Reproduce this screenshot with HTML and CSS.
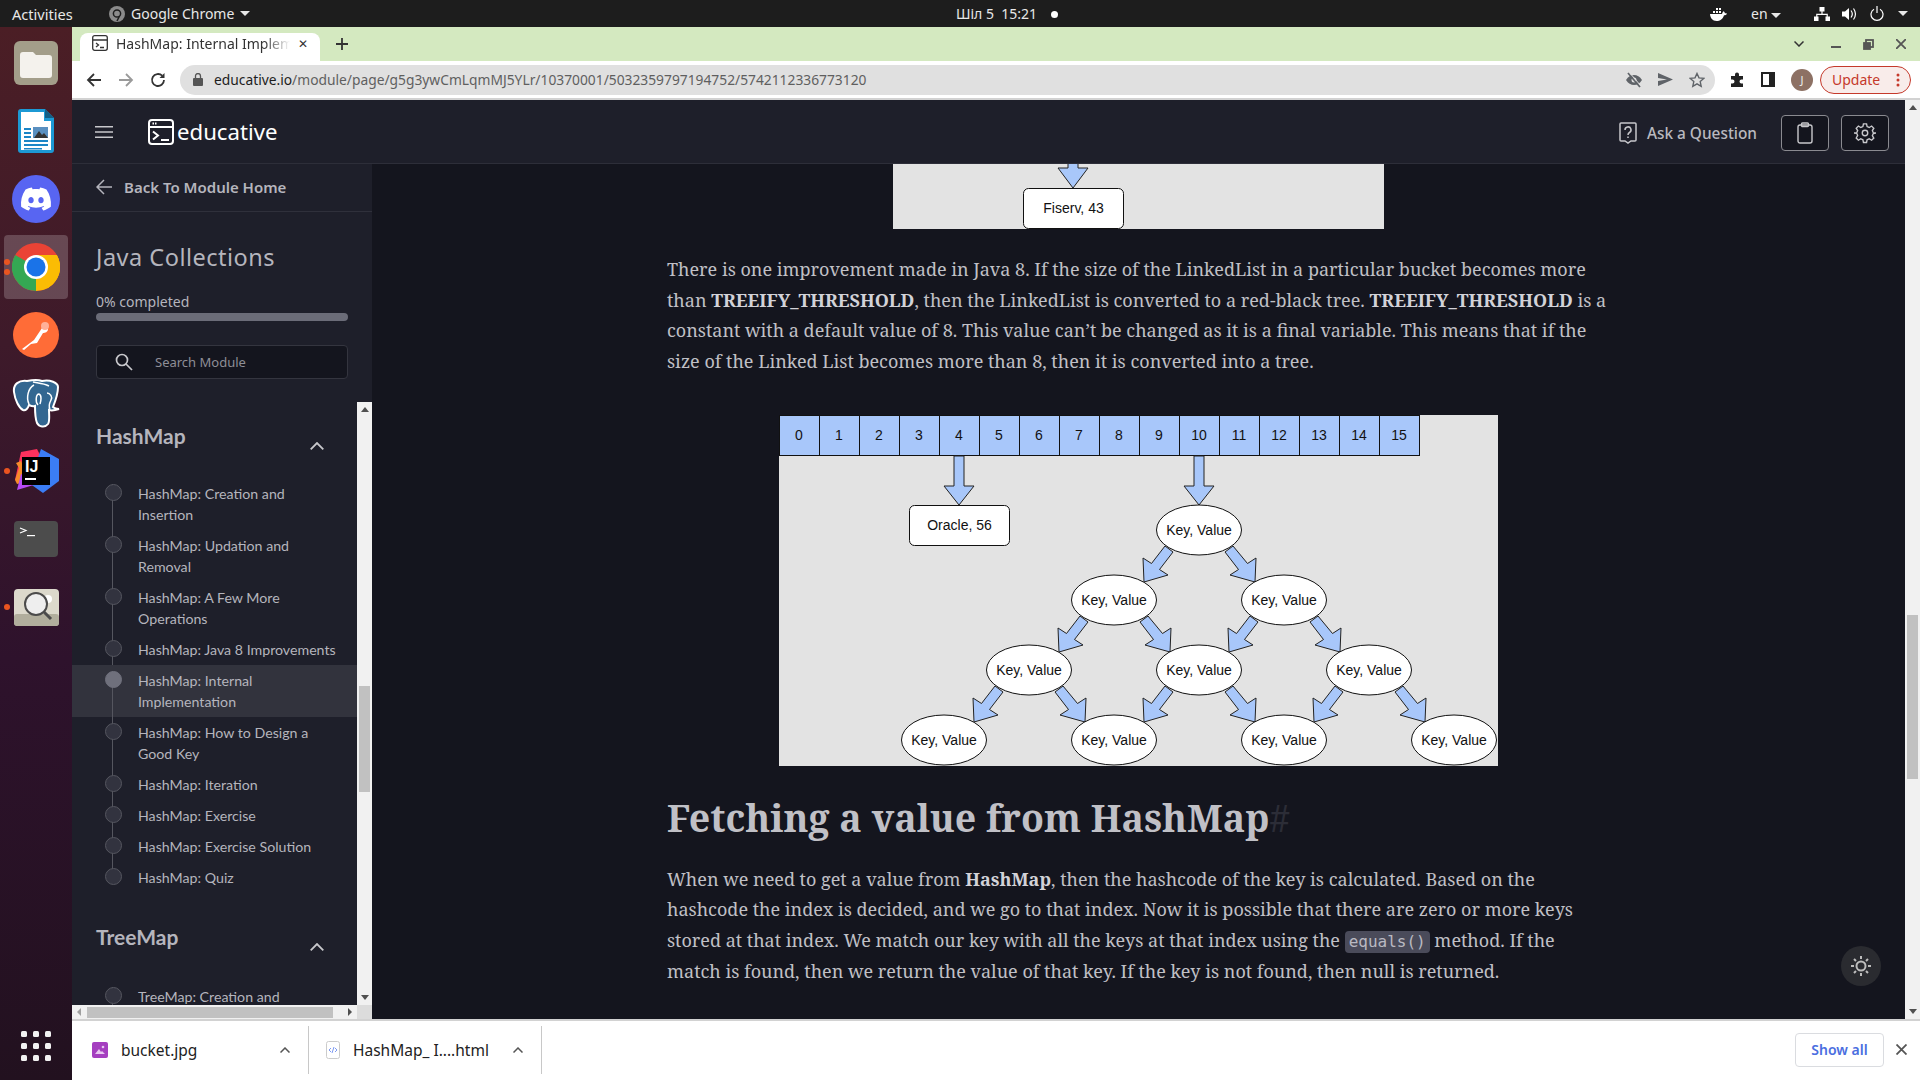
FILE: index.html
```html
<!DOCTYPE html>
<html lang="en">
<head>
  <meta charset="UTF-8">
  <title>HashMap: Internal Implementation</title>
  <link rel="stylesheet" href="styles.css">
</head>
<body>

  <svg class="defs" width="0" height="0">
    <defs>
      <polygon id="arrow-left" points="-34,16 -26,22 -39.5,39.5 -31,45 -55,52 -56,28 -47.5,33.5"/>
      <polygon id="arrow-right" points="34,16 26,22 39.5,39.5 31,45 56,52 57,28 48.5,33.5"/>
      <g id="node">
        <ellipse rx="42.5" ry="25"/>
        <text y="5">Key, Value</text>
      </g>
    </defs>
  </svg>

  <header class="topbar">
    <span class="topbar-activities">Activities</span>
    <span class="topbar-app">
      <svg width="16" height="16" viewBox="0 0 16 16"><circle cx="8" cy="8" r="8" fill="#8b8b8b"/><circle cx="8" cy="7.5" r="3.6" fill="none" stroke="#1d1d1d" stroke-width="1.5"/><path d="M10.5 10 8 15" stroke="#1d1d1d" stroke-width="1.5"/></svg>
      Google Chrome <i class="caret"></i>
    </span>
    <span class="topbar-clock">Шіл 5&nbsp; 15:21 <i class="clock-dot"></i></span>
    <span class="topbar-status">
      <svg class="st-docker" width="17" height="14" viewBox="0 0 17 14"><path d="M0 7h12c.4-1.500 1-2.500 1.800-2.800.7.500 1 1.200 1.100 2 .8-.1 1.500 0 2.100.5-.7 1.200-1.800 1.500-3 1.500C13 12 10 14 6.500 14 2.500 14 .3 11 0 7z" fill="#fff"/><path d="M3 4h2v2H3zM6 4h2v2H6zM9 4h2v2H9zM6 1h2v2H6zM9 1h2v2H9z" fill="#fff"/></svg>
      <span class="st-lang">en <i class="caret"></i></span>
      <svg class="st-net" width="16" height="14" viewBox="0 0 16 14" fill="#fff"><path d="M5.500 0h5v4.500h-5zM0 9.500h4.500V14H0zM11.500 9.500H16V14h-4.500zM7.400 4.500h1.200v2.300h5.200v2.700h-1.200V8H3.400v1.500H2.200V6.800h5.200z"/></svg>
      <svg class="st-vol" width="15" height="14" viewBox="0 0 15 14"><path d="M0 4.500h3L7 1v12L3 9.500H0z" fill="#fff"/><path d="M9 3.500c1.500 2 1.500 5 0 7M11.500 1.500c2.500 3.500 2.500 7.500 0 11" fill="none" stroke="#fff" stroke-width="1.200"/></svg>
      <svg class="st-power" width="14" height="15" viewBox="0 0 14 15"><path d="M4 3.200a6 6 0 1 0 6 0" fill="none" stroke="#fff" stroke-width="1.200"/><path d="M7 0v7" stroke="#fff" stroke-width="1.200"/></svg>
      <i class="caret"></i>
    </span>
  </header>

  <div class="desktop">
    <nav class="dock">
      <div class="dock-item">
        <svg width="44" height="44" viewBox="0 0 44 44"><rect width="44" height="44" rx="6" fill="#a39e8a"/><path d="M6 14a3 3 0 0 1 3-3h10l3 3h13a3 3 0 0 1 3 3v17a3 3 0 0 1-3 3H9a3 3 0 0 1-3-3z" fill="#f4f2ed"/></svg>
      </div>
      <div class="dock-item">
        <svg width="36" height="44" viewBox="0 0 36 44"><path d="M3 0h24l9 9v32a3 3 0 0 1-3 3H3a3 3 0 0 1-3-3V3a3 3 0 0 1 3-3z" fill="#1c99d4"/><path d="M3 3h23v9h7v29H3z" fill="#fff"/><path d="M27 0l9 9h-9z" fill="#125f86"/><path d="M6 19h7v2H6zM6 23h7v2H6zM6 27h7v2H6zM6 31h24v2H6zM6 35h24v2H6zM6 39h18v1.500H6z" fill="#1c86c6"/><rect x="15" y="18" width="15" height="11" fill="#5a90c0"/><path d="M16 29l5-7 3 4 2-2 4 5z" fill="#333"/></svg>
      </div>
      <div class="dock-item">
        <svg width="48" height="48" viewBox="0 0 48 48"><circle cx="24" cy="24" r="24" fill="#5865f2"/><g transform="translate(9 9) scale(1.250)"><path fill="#fff" d="M20.317 4.3698a19.7913 19.7913 0 00-4.8851-1.5152.0741.0741 0 00-.0785.0371c-.211.3753-.4447.8648-.6083 1.2495-1.8447-.2762-3.68-.2762-5.4868 0-.1636-.3933-.4058-.8742-.6177-1.2495a.077.077 0 00-.0785-.037 19.7363 19.7363 0 00-4.8852 1.515.0699.0699 0 00-.0321.0277C.5334 9.0458-.319 13.5799.0992 18.0578a.0824.0824 0 00.0312.0561c2.0528 1.5076 4.0413 2.4228 5.9929 3.0294a.0777.0777 0 00.0842-.0276c.4616-.6304.8731-1.2952 1.226-1.9942a.076.076 0 00-.0416-.1057c-.6528-.2476-1.2743-.5495-1.8722-.8923a.077.077 0 01-.0076-.1277c.1258-.0943.2517-.1923.3718-.2914a.0743.0743 0 01.0776-.0105c3.9278 1.7933 8.18 1.7933 12.0614 0a.0739.0739 0 01.0785.0095c.1202.099.246.1981.3728.2924a.077.077 0 01-.0066.1276 12.2986 12.2986 0 01-1.873.8914.0766.0766 0 00-.0407.1067c.3604.698.7719 1.3628 1.225 1.9932a.076.076 0 00.0842.0286c1.961-.6067 3.9495-1.5219 6.0023-3.0294a.077.077 0 00.0313-.0552c.5004-5.177-.8382-9.6739-3.5485-13.6604a.061.061 0 00-.0312-.0286zM8.02 15.3312c-1.1825 0-2.1569-1.0857-2.1569-2.419 0-1.3332.9555-2.4189 2.157-2.4189 1.2108 0 2.1757 1.0952 2.1568 2.419 0 1.3332-.9555 2.4189-2.1569 2.4189zm7.9748 0c-1.1825 0-2.1569-1.0857-2.1569-2.419 0-1.3332.9554-2.4189 2.1569-2.4189 1.2108 0 2.1757 1.0952 2.1568 2.419 0 1.3332-.946 2.4189-2.1568 2.4189Z"/></g></svg>
      </div>
      <div class="dock-item dock-active">
        <i class="run-dots"><b></b><b></b></i>
        <svg width="48" height="48" viewBox="0 0 48 48"><circle cx="24" cy="24" r="24" fill="#ea4335"/><path d="M24 24L3.200 12A24 24 0 0 0 24 48z" fill="#34a853"/><path d="M24 24v24a24 24 0 0 0 20.800-36z" fill="#fbbc04"/><path d="M24 12h20.800A24 24 0 0 1 36 44.800L24 24z" fill="#fbbc04"/><circle cx="24" cy="24" r="12" fill="#fff"/><circle cx="24" cy="24" r="9.500" fill="#1a73e8"/></svg>
      </div>
      <div class="dock-item">
        <svg width="46" height="46" viewBox="0 0 46 46"><circle cx="23" cy="23" r="23" fill="#ff6c37"/><path d="M9 37l12-9 8-12c2-3 6-3 6 1 0 3-3 4-5 4l-6 10-6 1-7 6z" fill="#fff"/><circle cx="32" cy="14" r="4" fill="#ffb199"/></svg>
      </div>
      <div class="dock-item">
        <svg width="48" height="49" viewBox="-1 -1 48 49"><path d="M14 1C6 0 0 4 1 12c1 8 5 16 9 18 3 1 5-2 6-5 2 1 4 2 6 1 0 6 0 12 2 17 2 4 8 5 11 1 2-3 1-9 1-14 3 1 7 0 10-1-3 0-5-1-6-2 2-5 5-14 5-20C45 3 37-1 29 1c-5-2-10-1-15 0z" fill="#336791" stroke="#fff" stroke-width="2"/><path d="M16 24C13 18 15 8 21 5M25 25c-3-3-2-11 1-11 3 1 2 7 1 10M37 29c-2-3 0-7 1-9 2-3-1-7-4-7M20 2c4 1 10 1 16 4" fill="none" stroke="#fff" stroke-width="1.500"/></svg>
      </div>
      <div class="dock-item">
        <i class="run-dots"><b></b></i>
        <svg width="46" height="46" viewBox="0 0 46 46"><path d="M8 4l16-3 4 8-12 20-14 3z" fill="#fe315d"/><path d="M28 1l18 10v22L30 45 16 35z" fill="#3b7df5"/><path d="M2 32l4-12-3-5 5-2 8 20-12 3z" fill="#f68b2b"/><path d="M4 42l4-16 16 10z" fill="#b74af7"/><rect x="9" y="9" width="28" height="28" fill="#000"/><text class="ij-text" x="12" y="24">IJ</text><rect x="12" y="30" width="11" height="2" fill="#fff"/></svg>
      </div>
      <div class="dock-item">
        <svg width="44" height="36" viewBox="0 0 44 36"><rect width="44" height="36" rx="4" fill="#4c4c4c"/><path d="M6 7l6 2.500-6 2.500" fill="none" stroke="#fff" stroke-width="1.200"/><path d="M13 14h8v1.200h-8z" fill="#fff"/></svg>
      </div>
      <div class="dock-item">
        <i class="run-dots"><b></b></i>
        <svg width="45" height="37" viewBox="0 0 45 37"><rect width="45" height="37" rx="4" fill="#dcd9cc"/><rect y="25" width="45" height="12" rx="3" fill="#b1ae9d"/><circle cx="34" cy="10" r="4" fill="#fff"/><circle cx="22" cy="15" r="11" fill="#eee" stroke="#4b4b4b" stroke-width="2"/><path d="M30 23l7 7" stroke="#4b4b4b" stroke-width="3"/></svg>
      </div>
      <div class="dock-apps">
        <i></i><i></i><i></i><i></i><i></i><i></i><i></i><i></i><i></i>
      </div>
    </nav>

    <div class="browser">
      <div class="tabstrip">
        <div class="tab">
          <svg width="16" height="16" viewBox="0 0 16 16" fill="none" stroke="#333" stroke-width="1.300"><rect x=".7" y=".7" width="14.600" height="14.600" rx="2"/><path d="M1 5h14M4 8l2.500 2L4 12M8 12.500h4"/></svg>
          <span class="tab-title">HashMap: Internal Implementation</span>
          <span class="tab-close">✕</span>
        </div>
        <svg class="tab-plus" width="12" height="12" viewBox="0 0 12 12"><path d="M6 0v12M0 6h12" stroke="#333" stroke-width="1.800"/></svg>
        <div class="window-btns">
          <svg class="win-list" width="10" height="6" viewBox="0 0 10 6" fill="none" stroke="#333" stroke-width="1.500"><path d="M.5.500L5 5 9.500.500"/></svg>
          <i class="win-min"></i>
          <svg width="11" height="11" viewBox="0 0 11 11" fill="none" stroke="#555" stroke-width="1.800"><rect x="3" y="1" width="7" height="7"/><rect x="1" y="4" width="6" height="6" fill="#555"/></svg>
          <svg width="10" height="10" viewBox="0 0 10 10" stroke="#555" stroke-width="1.800"><path d="M0 0l10 10M10 0L0 10"/></svg>
        </div>
      </div>

      <div class="toolbar">
        <svg width="16" height="16" viewBox="0 0 16 16" fill="none" stroke="#333" stroke-width="1.800"><path d="M15 8H2M8 2L2 8l6 6"/></svg>
        <svg width="16" height="16" viewBox="0 0 16 16" fill="none" stroke="#9a9a9a" stroke-width="1.800"><path d="M1 8h13M8 2l6 6-6 6"/></svg>
        <svg width="16" height="16" viewBox="0 0 16 16" fill="none" stroke="#333" stroke-width="1.800"><path d="M14 8a6 6 0 1 1-1.800-4.300"/><path d="M14.500 1v5h-5z" fill="#333" stroke="none"/></svg>
        <div class="omnibox">
          <svg width="10" height="13" viewBox="0 0 10 13"><rect y="5" width="10" height="8" rx="1" fill="#555"/><path d="M2.500 5V3a2.500 2.500 0 0 1 5 0v2" fill="none" stroke="#555" stroke-width="1.300"/></svg>
          <span class="url"><b>educative.io</b>/module/page/g5g3ywCmLqmMJ5YLr/10370001/5032359797194752/5742112336773120</span>
          <span class="omni-icons">
            <svg width="16" height="16" viewBox="0 0 16 16"><path d="M0 8c2-3.500 5-5 8-5s6 1.500 8 5c-2 3.500-5 5-8 5s-6-1.500-8-5z" fill="#5f6368"/><circle cx="8" cy="8" r="2.500" fill="#e0e0e0"/><path d="M2 1l12 14" stroke="#5f6368" stroke-width="1.800"/><path d="M3 0l12 14" stroke="#e0e0e0"/></svg>
            <svg width="15" height="13" viewBox="0 0 15 13"><path d="M0 0l15 6.500L0 13V8l9-1.500L0 5z" fill="#5f6368"/></svg>
            <svg width="16" height="16" viewBox="0 0 16 16"><path d="M8 1.500l2 4.400 4.800.5-3.600 3.200 1 4.700L8 11.900l-4.200 2.400 1-4.700L1.200 6.400 6 5.900z" fill="none" stroke="#5f6368" stroke-width="1.400"/></svg>
          </span>
        </div>
        <span class="tool-icons">
          <svg width="16" height="16" viewBox="0 0 16 16"><path d="M6 2.500a2 2 0 0 1 4 0V4h4v3.500h-1.500a2 2 0 0 0 0 4H14V15H2v-3.500h1.500a2 2 0 0 0 0-4H2V4h4z" fill="#222"/></svg>
          <svg width="14" height="15" viewBox="0 0 14 15"><rect x="1" y="1" width="12" height="13" fill="#fff" stroke="#222" stroke-width="2"/><rect x="8" y="1" width="5" height="13" fill="#222"/></svg>
          <span class="avatar">J</span>
        </span>
        <span class="update-btn">Update <svg width="4" height="14" viewBox="0 0 4 14" fill="#c5392b"><circle cx="2" cy="2" r="1.500"/><circle cx="2" cy="7" r="1.500"/><circle cx="2" cy="12" r="1.500"/></svg></span>
      </div>

      <div class="app">
        <div class="app-main">
          <div class="app-header">
            <svg class="burger" width="18" height="12" viewBox="0 0 18 12" fill="#c8c8cc"><path d="M0 0h18v1.600H0zM0 5.200h18v1.600H0zM0 10.400h18V12H0z"/></svg>
            <svg class="logo-icon" width="26" height="26" viewBox="0 0 26 26" fill="none" stroke="#fff" stroke-width="2"><rect x="1" y="1" width="24" height="24" rx="3"/><path d="M1 8h24M5 12.500l5 4-5 4M13 21h8"/><path d="M4.500 4.500h5" stroke-dasharray="1.500 1"/></svg>
            <span class="logo-text">educative</span>
            <span class="ask">
              <svg width="18" height="22" viewBox="0 0 18 22" fill="none" stroke="#c8c8cc" stroke-width="1.500"><path d="M2 1h14a1 1 0 0 1 1 1v16a1 1 0 0 1-1 1h-4l-3 2-3-2H2a1 1 0 0 1-1-1V2a1 1 0 0 1 1-1z"/><path d="M6 8a3 3 0 1 1 4.500 2.500C9.500 11 9 11.700 9 13M9 14.500v1.500"/></svg>
              Ask a Question
            </span>
            <span class="head-btn">
              <svg width="16" height="22" viewBox="0 0 16 22" fill="none" stroke="#c8c8cc" stroke-width="1.400"><rect x="1" y="3" width="14" height="18" rx="2"/><rect x="4.500" y="1" width="7" height="3.500" rx="1"/></svg>
            </span>
            <span class="head-btn">
              <svg width="22" height="22" viewBox="0 0 24 24" fill="none" stroke="#c8c8cc" stroke-width="1.500"><circle cx="12" cy="12" r="3"/><path d="M10.300 2h3.400l.6 3 2.300 1 2.600-1.600 2.400 2.400L20 9.400l1 2.300 3 .3v0l-3 .6-1 2.300 1.600 2.600-2.400 2.400-2.600-1.600-2.300 1-.6 3h-3.400l-.6-3-2.300-1-2.600 1.600-2.400-2.400L4 14.600l-1-2.300-3-.3v0l3-.3 1-2.300-1.600-2.600 2.400-2.400L7.400 6l2.300-1z"/></svg>
            </span>
          </div>

          <div class="app-body">
            <aside class="sidebar">
              <div class="back-row">
                <svg width="16" height="16" viewBox="0 0 16 16" fill="none" stroke="#b5b5bd" stroke-width="1.500"><path d="M16 8H1M8 1L1 8l7 7"/></svg>
                <span>Back To Module Home</span>
              </div>
              <div class="course-head">
                <h1>Java Collections</h1>
                <div class="progress-label">0% completed</div>
                <div class="progress-bar"></div>
                <div class="search-box">
                  <svg width="18" height="18" viewBox="0 0 18 18" fill="none" stroke="#c8c8cc" stroke-width="1.700"><circle cx="7" cy="7" r="5.500"/><path d="M11 11l6 6"/></svg>
                  <span>Search Module</span>
                </div>
              </div>

              <div class="side-scroll">
                <div class="side-list">
                  <div class="section-head">
                    <h2>HashMap</h2>
                    <svg width="14" height="8" viewBox="0 0 14 8" fill="none" stroke="#c8c8cc" stroke-width="1.800"><path d="M.7 7.300L7 1l6.300 6.300"/></svg>
                  </div>
                  <ul class="lessons">
                    <li>HashMap: Creation and<br>Insertion</li>
                    <li>HashMap: Updation and<br>Removal</li>
                    <li>HashMap: A Few More<br>Operations</li>
                    <li>HashMap: Java 8 Improvements</li>
                    <li class="active">HashMap: Internal<br>Implementation</li>
                    <li>HashMap: How to Design a<br>Good Key</li>
                    <li>HashMap: Iteration</li>
                    <li>HashMap: Exercise</li>
                    <li>HashMap: Exercise Solution</li>
                    <li class="last">HashMap: Quiz</li>
                  </ul>
                  <div class="section-head section-tree">
                    <h2>TreeMap</h2>
                    <svg width="14" height="8" viewBox="0 0 14 8" fill="none" stroke="#c8c8cc" stroke-width="1.800"><path d="M.7 7.300L7 1l6.300 6.300"/></svg>
                  </div>
                  <ul class="lessons">
                    <li>TreeMap: Creation and<br>Insertion</li>
                  </ul>
                </div>
                <div class="vbar side-vbar">
                  <i class="up"></i>
                  <b class="thumb"></b>
                  <i class="down"></i>
                </div>
              </div>
              <div class="hbar">
                <i class="left"></i>
                <b class="thumb"></b>
                <i class="right"></i>
                <span class="corner"></span>
              </div>
            </aside>

            <main class="content">
              <div class="column">
                <svg class="figure figure-top" width="491" height="65" viewBox="0 0 491 65">
                  <rect class="fig-bg" width="491" height="65"/>
                  <polygon class="fig-arrow" points="175,-5 185,-5 185,4 195,4 180,24 165,4 175,4"/>
                  <rect class="fig-box" x="130.500" y="24.500" width="100" height="40" rx="5"/>
                  <text x="180.500" y="49">Fiserv, 43</text>
                </svg>

                <p>There is one improvement made in Java 8. If the size of the LinkedList in a particular bucket becomes more<br>
                than <strong>TREEIFY_THRESHOLD</strong>, then the LinkedList is converted to a red-black tree. <strong>TREEIFY_THRESHOLD</strong> is a<br>
                constant with a default value of 8. This value can’t be changed as it is a final variable. This means that if the<br>
                size of the Linked List becomes more than 8, then it is converted into a tree.</p>

                <svg class="figure figure-tree" width="719" height="351" viewBox="0 0 719 351">
                  <rect class="fig-bg" width="719" height="351"/>
                  <g class="cells">
                    <rect x="0.500" y="0.500" width="40" height="40"/><rect x="40.500" y="0.500" width="40" height="40"/><rect x="80.500" y="0.500" width="40" height="40"/><rect x="120.500" y="0.500" width="40" height="40"/>
                    <rect x="160.500" y="0.500" width="40" height="40"/><rect x="200.500" y="0.500" width="40" height="40"/><rect x="240.500" y="0.500" width="40" height="40"/><rect x="280.500" y="0.500" width="40" height="40"/>
                    <rect x="320.500" y="0.500" width="40" height="40"/><rect x="360.500" y="0.500" width="40" height="40"/><rect x="400.500" y="0.500" width="40" height="40"/><rect x="440.500" y="0.500" width="40" height="40"/>
                    <rect x="480.500" y="0.500" width="40" height="40"/><rect x="520.500" y="0.500" width="40" height="40"/><rect x="560.500" y="0.500" width="40" height="40"/><rect x="600.500" y="0.500" width="40" height="40"/>
                  </g>
                  <text x="20" y="25">0</text><text x="60" y="25">1</text><text x="100" y="25">2</text><text x="140" y="25">3</text>
                  <text x="180" y="25">4</text><text x="220" y="25">5</text><text x="260" y="25">6</text><text x="300" y="25">7</text>
                  <text x="340" y="25">8</text><text x="380" y="25">9</text><text x="420" y="25">10</text><text x="460" y="25">11</text>
                  <text x="500" y="25">12</text><text x="540" y="25">13</text><text x="580" y="25">14</text><text x="620" y="25">15</text>

                  <polygon class="fig-arrow" points="175,41 185,41 185,71 195,71 180,90 165,71 175,71"/>
                  <polygon class="fig-arrow" points="415,41 425,41 425,71 435,71 420,90 405,71 415,71"/>
                  <rect class="fig-box" x="130.500" y="90.500" width="100" height="40" rx="5"/>
                  <text x="180.500" y="115">Oracle, 56</text>

                  <g class="fig-arrow">
                    <use href="#arrow-left" x="420" y="115"/><use href="#arrow-right" x="420" y="115"/>
                    <use href="#arrow-left" x="335" y="185"/><use href="#arrow-right" x="335" y="185"/>
                    <use href="#arrow-left" x="505" y="185"/><use href="#arrow-right" x="505" y="185"/>
                    <use href="#arrow-left" x="250" y="255"/><use href="#arrow-right" x="250" y="255"/>
                    <use href="#arrow-left" x="420" y="255"/><use href="#arrow-right" x="420" y="255"/>
                    <use href="#arrow-left" x="590" y="255"/><use href="#arrow-right" x="590" y="255"/>
                  </g>
                  <use href="#node" x="420" y="115"/>
                  <use href="#node" x="335" y="185"/><use href="#node" x="505" y="185"/>
                  <use href="#node" x="250" y="255"/><use href="#node" x="420" y="255"/><use href="#node" x="590" y="255"/>
                  <use href="#node" x="165" y="325"/><use href="#node" x="335" y="325"/><use href="#node" x="505" y="325"/><use href="#node" x="675" y="325"/>
                </svg>

                <h2 class="article-h">Fetching a value from HashMap<span class="hash">#</span></h2>

                <p>When we need to get a value from <strong>HashMap</strong>, then the hashcode of the key is calculated. Based on the<br>
                hashcode the index is decided, and we go to that index. Now it is possible that there are zero or more keys<br>
                stored at that index. We match our key with all the keys at that index using the <code>equals()</code> method. If the<br>
                match is found, then we return the value of that key. If the key is not found, then null is returned.</p>
              </div>
              <div class="theme-toggle">
                <svg width="20" height="20" viewBox="0 0 20 20" fill="none" stroke="#bdbdbd" stroke-width="2"><circle cx="10" cy="10" r="4.500"/><path d="M10 0v3M10 17v3M0 10h3M17 10h3M3 3l2 2M15 15l2 2M17 3l-2 2M5 15l-2 2"/></svg>
              </div>
            </main>
          </div>
        </div>
        <div class="vbar page-vbar">
          <i class="up"></i>
          <b class="thumb"></b>
          <i class="down"></i>
        </div>
      </div>

      <div class="downloads">
        <div class="dl-item dl-first">
          <svg width="16" height="16" viewBox="0 0 16 16"><rect width="16" height="16" rx="2" fill="#a53fc0"/><path d="M3 12l4-5 2 3 1-1 3 3z" fill="#e8c8f0"/><circle cx="11" cy="5" r="1.300" fill="#e8c8f0"/></svg>
          <span class="dl-name">bucket.jpg</span>
          <svg class="dl-chev" width="10" height="6" viewBox="0 0 10 6" fill="none" stroke="#555" stroke-width="1.500"><path d="M.5 5.500L5 1l4.500 4.500"/></svg>
        </div>
        <div class="dl-item dl-second">
          <svg width="14" height="18" viewBox="0 0 14 18"><rect x=".5" y=".5" width="13" height="17" rx="2" fill="#fff" stroke="#ccc"/><path d="M5 7L3 9l2 2M9 7l2 2-2 2M8 6l-2 6" fill="none" stroke="#6f8ff0" stroke-width=".9"/></svg>
          <span class="dl-name">HashMap_ I....html</span>
          <svg class="dl-chev" width="10" height="6" viewBox="0 0 10 6" fill="none" stroke="#555" stroke-width="1.500"><path d="M.5 5.500L5 1l4.500 4.500"/></svg>
        </div>
        <span class="show-all">Show all</span>
        <svg class="dl-close" width="11" height="11" viewBox="0 0 11 11" stroke="#555" stroke-width="1.800"><path d="M.5.500l10 10M10.500.500l-10 10"/></svg>
      </div>
    </div>
  </div>

</body>
</html>
```

FILE: styles.css
```css
* {
  box-sizing: border-box;
}

html, body {
  margin: 0;
  padding: 0;
  height: 100%;
  overflow: hidden;
}

body {
  width: 1920px;
  height: 1080px;
  display: flex;
  flex-direction: column;
  font-family: "Noto Sans", sans-serif;
}

.defs {
  position: absolute;
}

.caret {
  display: inline-block;
  width: 0;
  height: 0;
  border-left: 5px solid transparent;
  border-right: 5px solid transparent;
  border-top: 5px solid currentColor;
  vertical-align: middle;
}

/* ubuntu top bar */
.topbar {
  height: 27px;
  background: #1d1d1d;
  color: #e8e8e8;
  font-size: 14px;
  display: flex;
  align-items: center;
  position: relative;
  flex: none;
}

.topbar-activities {
  margin-left: 12px;
  width: 97px;
  font-size: 14.6px;
}

.topbar-app {
  display: flex;
  align-items: center;
  gap: 6px;
}

.topbar-clock {
  position: absolute;
  left: 956px;
  top: 4px;
  white-space: nowrap;
}

.clock-dot {
  display: inline-block;
  width: 7px;
  height: 7px;
  border-radius: 50%;
  background: #fff;
  margin-left: 10px;
  vertical-align: 1px;
}

.topbar-status {
  margin-left: auto;
  display: flex;
  align-items: center;
  padding-right: 12px;
}

.st-lang {
  margin-left: 24px;
  width: 54px;
}

.st-net { margin-left: 9px; }
.st-vol { margin-left: 12px; }
.st-power { margin-left: 13px; }
.topbar-status > .caret { margin-left: 14px; }

.desktop {
  flex: 1;
  display: flex;
  min-height: 0;
}

/* dock */
.dock {
  width: 72px;
  flex: none;
  display: flex;
  flex-direction: column;
  padding-top: 2px;
  background: linear-gradient(to bottom, #4b1e25 0%, #3e1a2a 30%, #2e122c 60%, #22111f 100%);
}

.dock-item {
  height: 68px;
  display: flex;
  align-items: center;
  justify-content: center;
  position: relative;
  flex: none;
}

.dock-active::before {
  content: "";
  position: absolute;
  left: 4px;
  right: 4px;
  top: 2px;
  bottom: 2px;
  border-radius: 4px;
  background: rgba(255, 255, 255, 0.2);
}

.dock-active svg {
  position: relative;
}

.run-dots {
  position: absolute;
  left: 4px;
  top: 50%;
  transform: translateY(-50%);
  display: flex;
  flex-direction: column;
  gap: 4px;
}

.run-dots b {
  display: block;
  width: 6px;
  height: 6px;
  border-radius: 50%;
  background: #e95420;
}

.ij-text {
  font-family: "Liberation Sans", sans-serif;
  font-weight: bold;
  font-size: 16px;
  fill: #fff;
}

.dock-apps {
  margin: auto 0 19px 21px;
  width: 30px;
  display: grid;
  grid-template-columns: repeat(3, 6px);
  gap: 6px;
}

.dock-apps i {
  width: 6px;
  height: 6px;
  border-radius: 1.5px;
  background: #f2f2f2;
}

.browser {
  flex: 1;
  min-width: 0;
  display: flex;
  flex-direction: column;
}

/* chrome tabs */
.tabstrip {
  height: 34px;
  flex: none;
  background: #d4e9c0;
  display: flex;
  align-items: flex-end;
  padding-left: 8px;
}

.tab {
  width: 240px;
  height: 28px;
  background: #fff;
  border-radius: 8px 8px 0 0;
  display: flex;
  align-items: center;
  padding: 0 12px 8px;
  gap: 8px;
}

.tab svg {
  flex: none;
}

.tab-title {
  flex: 1;
  font-size: 14px;
  color: #333;
  white-space: nowrap;
  overflow: hidden;
  -webkit-mask-image: linear-gradient(to right, #000 85%, transparent);
  mask-image: linear-gradient(to right, #000 85%, transparent);
}

.tab-close {
  font-size: 12px;
  color: #333;
}

.tab-plus {
  margin: 0 0 11px 16px;
}

.window-btns {
  margin-left: auto;
  display: flex;
  align-items: center;
  gap: 22px;
  height: 34px;
  padding-right: 14px;
}

.win-list {
  margin-right: 5px;
}

.win-min {
  width: 10px;
  height: 2px;
  background: #555;
  margin-top: 6px;
}

/* chrome toolbar */
.toolbar {
  height: 39px;
  flex: none;
  background: #fff;
  border-bottom: 2px solid #d2d2d2;
  display: flex;
  align-items: center;
  padding-left: 14px;
  gap: 16px;
}

.toolbar > svg {
  flex: none;
}

.omnibox {
  width: 1535px;
  margin-left: -2px;
  height: 30px;
  flex: none;
  background: #e0e0e0;
  border-radius: 15px;
  display: flex;
  align-items: center;
  padding-left: 13px;
  gap: 11px;
}

.url {
  font-size: 13.8px;
  color: #5f5f5f;
  white-space: nowrap;
}

.url b {
  font-weight: normal;
  color: #1d1d1d;
}

.omni-icons {
  margin-left: auto;
  padding-right: 10px;
  display: flex;
  align-items: center;
  gap: 16px;
}

.tool-icons {
  display: flex;
  align-items: center;
  gap: 16px;
  margin-left: -2px;
}

.avatar {
  width: 22px;
  height: 22px;
  border-radius: 50%;
  background: #8d7164;
  color: #eee;
  font-size: 11px;
  display: flex;
  align-items: center;
  justify-content: center;
}

.update-btn {
  width: 91px;
  height: 28px;
  margin-left: -9px;
  border: 1px solid #c5392b;
  border-radius: 14px;
  background: #f8ecea;
  color: #c5392b;
  font-size: 14px;
  display: flex;
  align-items: center;
  justify-content: space-between;
  padding: 0 10px 0 11px;
}

/* educative page */
.app {
  flex: 1;
  min-height: 0;
  display: flex;
}

.app-main {
  flex: 1;
  min-width: 0;
  display: flex;
  flex-direction: column;
}

.app-header {
  height: 64px;
  flex: none;
  background: #1e1f2a;
  border-bottom: 1px solid #2d2e39;
  display: flex;
  align-items: center;
  padding: 0 16px 0 23px;
}

.burger { margin-top: 1px; }
.logo-icon { margin-left: 35px; }

.logo-text {
  margin-left: 3px;
  color: #fff;
  font-size: 22.2px;
  font-family: "Noto Sans", sans-serif;
}

.ask {
  margin: 3px 24px 0 auto;
  display: flex;
  align-items: center;
  gap: 10px;
  font-size: 15.4px;
  font-weight: 500;
  color: #b9b9bf;
}

.head-btn {
  width: 48px;
  height: 36px;
  margin-top: 3px;
  border: 1px solid #8a8a90;
  border-radius: 4px;
  background: #14151e;
  display: flex;
  align-items: center;
  justify-content: center;
}

.head-btn + .head-btn {
  margin-left: 12px;
}

.app-body {
  flex: 1;
  min-height: 0;
  display: flex;
}

/* sidebar */
.sidebar {
  width: 300px;
  flex: none;
  background: #1e1f2a;
  display: flex;
  flex-direction: column;
  color: #b5b5bd;
}

.back-row {
  height: 48px;
  flex: none;
  border-bottom: 1px solid #2f303b;
  display: flex;
  align-items: center;
  gap: 12px;
  padding: 0 0 2px 24px;
  font-size: 15px;
  font-weight: 600;
}

.course-head {
  height: 190px;
  flex: none;
  padding: 29px 24px 0;
}

.course-head h1 {
  margin: 0;
  font-size: 23.5px;
  line-height: 32px;
  font-weight: 400;
  letter-spacing: 0.5px;
  color: #b5b5bd;
}

.progress-label {
  margin-top: 19px;
  font-size: 14px;
  line-height: 20px;
}

.progress-bar {
  margin-top: 1px;
  height: 8px;
  border-radius: 4px;
  background: #6b6c78;
}

.search-box {
  margin-top: 24px;
  height: 34px;
  border: 1px solid #34353f;
  border-radius: 4px;
  background: #14151e;
  display: flex;
  align-items: center;
  padding-left: 18px;
  gap: 22px;
  font-size: 13px;
  color: #8e8e96;
}

.side-scroll {
  flex: 1;
  min-height: 0;
  display: flex;
  overflow: hidden;
}

.side-list {
  flex: 1;
  min-width: 0;
  overflow: hidden;
}

.section-head {
  height: 76px;
  padding: 21px 33px 0 24px;
  display: flex;
  justify-content: space-between;
  align-items: flex-start;
}

.section-head h2 {
  margin: 0;
  font-family: "Lato", sans-serif;
  font-size: 21px;
  line-height: 26px;
  font-weight: 700;
  color: #b5b5bd;
}

.section-head svg {
  margin-top: 19px;
}

.section-tree {
  margin-top: 14px;
  height: 73.5px;
  padding-top: 17px;
}

.lessons {
  list-style: none;
  margin: 0;
  padding: 0;
}

.lessons li {
  position: relative;
  padding: 5px 10px 5px 66px;
  font-family: "Lato", sans-serif;
  font-size: 14.2px;
  line-height: 21px;
  color: #b5b5bd;
}

/* dot and connecting line of a lesson */
.lessons li::before {
  content: "";
  position: absolute;
  left: 33px;
  top: 6px;
  width: 15px;
  height: 15px;
  border-radius: 50%;
  background: #32333f;
  border: 1px solid #55565f;
  z-index: 1;
}

.lessons li::after {
  content: "";
  position: absolute;
  left: 40px;
  top: 6px;
  bottom: -7px;
  width: 1px;
  background: #55565f;
}

.lessons li.last::after {
  display: none;
}

.lessons li.active {
  background: #32333d;
}

.lessons li.active::before {
  background: #6f707c;
  border-color: #6f707c;
}

/* scrollbars */
.vbar {
  width: 15px;
  flex: none;
  background: #f1f1f1;
  display: flex;
  flex-direction: column;
  align-items: center;
}

.vbar .thumb {
  width: 11px;
  background: #c1c1c1;
  display: block;
}

.vbar .up, .vbar .down {
  width: 0;
  height: 0;
  border-left: 4px solid transparent;
  border-right: 4px solid transparent;
  flex: none;
}

.vbar .up {
  border-bottom: 5px solid #505050;
  margin-top: 5px;
}

.vbar .down {
  margin-top: auto;
  margin-bottom: 5px;
  border-top: 5px solid #505050;
}

.side-vbar .thumb {
  margin-top: 274px;
  height: 106px;
}

.page-vbar .thumb {
  margin-top: 505px;
  height: 164px;
}

.hbar {
  height: 14px;
  flex: none;
  background: #f1f1f1;
  display: flex;
  align-items: center;
  padding-left: 5px;
  position: relative;
}

.hbar .thumb {
  display: block;
  margin-left: 6px;
  width: 246px;
  height: 11px;
  background: #c1c1c1;
}

.hbar .left, .hbar .right {
  width: 0;
  height: 0;
  border-top: 4px solid transparent;
  border-bottom: 4px solid transparent;
}

.hbar .left { border-right: 4px solid #a0a0a0; }

.hbar .right {
  margin-left: 15px;
  border-left: 4px solid #505050;
}

.hbar .corner {
  margin-left: auto;
  width: 15px;
  height: 14px;
  background: #dcdcdc;
}

/* article */
.content {
  flex: 1;
  min-width: 0;
  background: #14151e;
  position: relative;
  overflow: hidden;
}

.column {
  width: 943px;
  margin: 0 auto;
  display: flex;
  flex-direction: column;
  align-items: flex-start;
}

.column p {
  margin: 0;
  font-family: "Noto Serif", "DejaVu Serif", serif;
  font-size: 18px;
  line-height: 30.6px;
  color: #c0c0c6;
  white-space: nowrap;
}

.column p strong {
  color: #d2d2d8;
}

.figure {
  display: block;
  align-self: center;
  flex: none;
}

.figure text, #node text {
  font-family: "Liberation Sans", sans-serif;
  font-size: 14px;
  text-anchor: middle;
  fill: #111;
}

.figure-top {
  margin-bottom: 25px;
}

.figure-tree {
  margin-top: 39px;
}

.fig-bg { fill: #e3e3e3; }

.fig-arrow {
  fill: #a8c7fa;
  stroke: #222;
  stroke-width: 1;
}

.fig-box {
  fill: #fff;
  stroke: #111;
  stroke-width: 1;
}

.cells rect {
  fill: #a8c7fa;
  stroke: #111;
  stroke-width: 1;
}

#node ellipse {
  fill: #fff;
  stroke: #111;
  stroke-width: 1;
}

.article-h {
  margin: 26.5px 0 21px;
  font-family: "Noto Serif", "DejaVu Serif", serif;
  font-size: 37.5px;
  line-height: 50px;
  font-weight: 700;
  color: #c0c0c6;
  white-space: nowrap;
}

.hash {
  color: #2c2d37;
  font-weight: 400;
}

code {
  display: inline-block;
  height: 22px;
  line-height: 22px;
  padding: 0 4px;
  font-family: "DejaVu Sans Mono", monospace;
  font-size: 16px;
  background: #4a4b5a;
  color: #b9b9c1;
  border-radius: 4px;
}

.theme-toggle {
  position: absolute;
  right: 24px;
  bottom: 33px;
  width: 40px;
  height: 40px;
  border-radius: 50%;
  background: #2a2b30;
  display: flex;
  align-items: center;
  justify-content: center;
}

/* download shelf */
.downloads {
  height: 61px;
  flex: none;
  background: #fff;
  border-top: 2px solid #d2d2d2;
  display: flex;
  align-items: center;
  padding-bottom: 2px;
}

.dl-item {
  height: 48px;
  display: flex;
  align-items: center;
  border-right: 1px solid #c8c8c8;
}

.dl-first {
  width: 237px;
  padding-left: 20px;
}

.dl-second {
  width: 233px;
  padding-left: 17px;
}

.dl-name {
  margin-left: 13px;
  font-size: 15.5px;
  color: #222;
  white-space: nowrap;
}

.dl-chev {
  margin-left: auto;
  margin-right: 18px;
}

.show-all {
  margin-left: auto;
  width: 89px;
  height: 34px;
  border: 1px solid #dadce0;
  border-radius: 4px;
  color: #4a6ee0;
  font-size: 14px;
  font-weight: 600;
  display: flex;
  align-items: center;
  justify-content: center;
}

.dl-close {
  margin: 0 13px 0 12px;
}
```
